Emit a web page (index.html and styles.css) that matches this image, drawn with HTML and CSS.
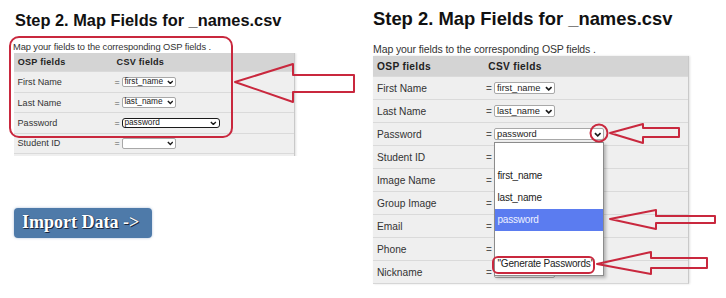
FILE: index.html
```html
<!DOCTYPE html>
<html lang="en">
<head>
    <meta charset="UTF-8">
    <meta name="viewport" content="width=device-width, initial-scale=1.0">
    <title>Map Fields</title>
    <link rel="stylesheet" href="styles.css">
</head>
<body>

    <div class="page">

        <!-- Before: mapping form -->
        <section class="panel panel-small">
            <h2 class="title">Step 2. Map Fields for _names.csv</h2>
            <p class="intro">Map your fields to the corresponding OSP fields .</p>

            <div class="table-clip">
                <div class="grid">
                    <div class="row row-head"><span>OSP fields</span><span>CSV fields</span></div>
                    <div class="row">
                        <span class="label">First Name</span>
                        <span class="csv"><span class="eq">=</span><span class="pick"><span>first_name</span><svg class="chev" viewBox="0 0 8 5"><path d="M1 1l3 3 3-3"/></svg></span></span>
                    </div>
                    <div class="row">
                        <span class="label">Last Name</span>
                        <span class="csv"><span class="eq">=</span><span class="pick"><span>last_name</span><svg class="chev" viewBox="0 0 8 5"><path d="M1 1l3 3 3-3"/></svg></span></span>
                    </div>
                    <div class="row">
                        <span class="label">Password</span>
                        <span class="csv"><span class="eq">=</span><span class="pick pick-wide pick-focus"><span>password</span><svg class="chev" viewBox="0 0 8 5"><path d="M1 1l3 3 3-3"/></svg></span></span>
                    </div>
                    <div class="row">
                        <span class="label">Student ID</span>
                        <span class="csv"><span class="eq">=</span><span class="pick"><span></span><svg class="chev" viewBox="0 0 8 5"><path d="M1 1l3 3 3-3"/></svg></span></span>
                    </div>
                    <div class="row"></div>
                </div>
            </div>

            <button class="import-btn">Import Data -&gt;</button>
        </section>

        <!-- After: dropdown open -->
        <section class="panel">
            <h2 class="title">Step 2. Map Fields for _names.csv</h2>
            <p class="intro">Map your fields to the corresponding OSP fields .</p>

            <div class="grid grid-full">
                <div class="row row-head"><span>OSP fields</span><span>CSV fields</span></div>
                <div class="row">
                    <span class="label">First Name</span>
                    <span class="csv"><span class="eq">=</span><span class="pick"><span>first_name</span><svg class="chev" viewBox="0 0 8 5"><path d="M1 1l3 3 3-3"/></svg></span></span>
                </div>
                <div class="row">
                    <span class="label">Last Name</span>
                    <span class="csv"><span class="eq">=</span><span class="pick"><span>last_name</span><svg class="chev" viewBox="0 0 8 5"><path d="M1 1l3 3 3-3"/></svg></span></span>
                </div>
                <div class="row">
                    <span class="label">Password</span>
                    <span class="csv"><span class="eq">=</span>
                        <span class="pick pick-wide"><span>password</span><svg class="chev" viewBox="0 0 8 5"><path d="M1 1l3 3 3-3"/></svg>
                            <span class="menu">
                                <span class="menu-item"></span>
                                <span class="menu-item">first_name</span>
                                <span class="menu-item">last_name</span>
                                <span class="menu-item selected">password</span>
                                <span class="menu-item"></span>
                                <span class="menu-item">"Generate Passwords"</span>
                            </span>
                        </span>
                    </span>
                </div>
                <div class="row">
                    <span class="label">Student ID</span>
                    <span class="csv"><span class="eq">=</span><span class="pick"><span></span></span></span>
                </div>
                <div class="row">
                    <span class="label">Image Name</span>
                    <span class="csv"><span class="eq">=</span><span class="pick"><span></span></span></span>
                </div>
                <div class="row">
                    <span class="label">Group Image</span>
                    <span class="csv"><span class="eq">=</span><span class="pick"><span></span></span></span>
                </div>
                <div class="row">
                    <span class="label">Email</span>
                    <span class="csv"><span class="eq">=</span><span class="pick"><span></span></span></span>
                </div>
                <div class="row">
                    <span class="label">Phone</span>
                    <span class="csv"><span class="eq">=</span><span class="pick"><span></span></span></span>
                </div>
                <div class="row">
                    <span class="label">Nickname</span>
                    <span class="csv"><span class="eq">=</span><span class="pick"><span></span></span></span>
                </div>
            </div>
        </section>
    </div>

    <!-- Red hand-drawn annotations -->
    <svg class="marks" viewBox="0 0 726 298">
        <rect x="10" y="37" width="222" height="100" rx="9"/>
        <polygon points="235,82 293,64 293,75 354,75 354,92 293,92 293,102"/>
        <circle cx="599" cy="133" r="8.5"/>
        <polygon points="610,133 643,124 643,128 679,128 679,137 643,137 643,143"/>
        <polygon points="610,219 656,210 656,216 715,216 715,223 656,223 656,229"/>
        <rect x="493" y="257" width="101" height="16" rx="5"/>
        <polygon points="597,264 651,252 651,258 707,258 707,268 651,268 651,274"/>
    </svg>

</body>
</html>
```

FILE: styles.css
```css
* {
    box-sizing: border-box;
    margin: 0;
    padding: 0;
}

body {
    position: relative;
    width: 726px;
    height: 298px;
    overflow: hidden;
    background: #fff;
    font-family: "Liberation Sans", Arial, sans-serif;
    color: #222;
}

.page {
    display: flex;
}

/* Panels: everything inside is sized in em, the small one is the same form scaled down */
.panel {
    width: 363px;
    font-size: 10px;
    padding: 8.2px 0 0 10px;
}

.panel-small {
    font-size: 8.9px;
    padding: 10.6px 0 0 14px;
}

.title {
    font-size: 1.84em;
    line-height: 1.15;
    font-weight: bold;
    color: #111;
}

.panel-small .title { margin-left: 1px; }

.intro {
    font-size: 1.05em;
    line-height: 1.15;
    margin-top: 1.3em;
    color: #333;
    letter-spacing: -0.01em;
}

.panel-small .intro { margin-left: -1px; }

/* Field table */
.table-clip {
    height: 11.55em;
    overflow: hidden;
    margin-top: 0.1em;
}

.grid {
    width: 31.6em;
    background: #efefef;
    border-right: 1px solid #c9c9c9;
    box-shadow: 1px 0 2px rgba(0, 0, 0, 0.12);
}

.grid-full {
    margin-top: 0.1em;
    border-bottom: 1px solid #d6d6d6;
}

.row {
    display: grid;
    grid-template-columns: 10.9em 1fr;
    align-items: center;
    height: 2.3em;
    padding-left: 0.4em;
    border-top: 1px solid #dadada;
}

.row-head {
    height: 2em;
    background: #d4d4d4;
    border-top: 0;
    font-weight: bold;
    font-size: 1.02em;
    letter-spacing: 0.03em;
    color: #222;
}

.label {
    font-size: 1.02em;
    color: #333;
}

.csv {
    display: flex;
    align-items: center;
}

.eq {
    width: 0.8em;
    color: #555;
}

/* Select boxes */
.pick {
    position: relative;
    display: flex;
    align-items: center;
    justify-content: space-between;
    width: 6.1em;
    height: 1.2em;
    padding: 0 0.2em 0 0.2em;
    background: #fff;
    border: 1px solid #a8a8a8;
    border-radius: 2px;
    color: #222;
    line-height: 1;
    font-size: 1em;
}

.pick > span:first-child {
    font-size: 0.93em;
    white-space: nowrap;
}

.pick-wide { width: 11em; }

.pick-focus {
    border-color: #1a1a1a;
    border-radius: 3px;
}

.chev {
    width: 0.75em;
    height: 0.5em;
    flex: none;
    fill: none;
    stroke: #1a1a1a;
    stroke-width: 1.7;
}

/* Open dropdown */
.menu {
    position: absolute;
    left: -1px;
    top: calc(100% + 3px);
    width: 11em;
    background: #fff;
    border: 1px solid #8c8c8c;
    box-shadow: 2px 2px 3px rgba(0, 0, 0, 0.25);
    z-index: 3;
}

.menu-item {
    display: flex;
    align-items: center;
    height: 2.2em;
    padding-left: 0.25em;
    color: #222;
    white-space: nowrap;
    font-size: 1em;
    letter-spacing: -0.02em;
}

.menu-item.selected {
    background: #5b7cf0;
    color: #eef1ff;
}

/* Button */
.import-btn {
    display: block;
    margin-top: 52px;
    width: 138px;
    height: 30px;
    padding-left: 8px;
    text-align: left;
    background: #4e7aa9;
    border: none;
    border-radius: 4px;
    color: #fff;
    font-family: "Liberation Serif", "Times New Roman", serif;
    font-weight: bold;
    font-size: 18px;
    text-shadow: 1px 1px 0 #1b2940, 0 0 1px #1b2940;
    box-shadow: 0 0 2px 1px rgba(190, 205, 225, 0.6);
}

/* Annotations */
.marks {
    position: absolute;
    top: 0;
    left: 0;
    width: 726px;
    height: 298px;
    pointer-events: none;
    z-index: 5;
    fill: none;
    stroke: #c9283e;
    stroke-width: 2;
    stroke-linejoin: round;
}
```
